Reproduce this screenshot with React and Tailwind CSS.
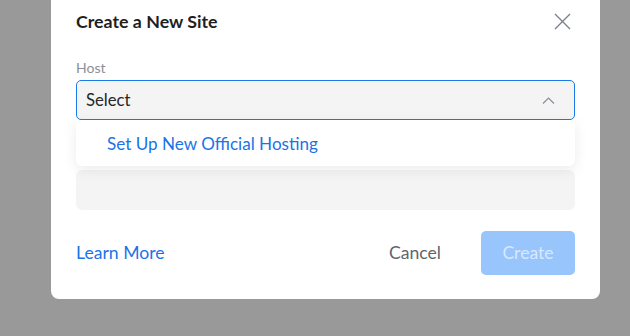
import React from 'react';

export default function App() {
  return (
    <div
      className="w-[630px] h-[336px] bg-[#999999] overflow-hidden"
      style={{ fontFamily: 'Lato, "Open Sans", sans-serif' }}
    >
      <div className="ml-[51px] w-[549px] bg-white rounded-b-[8px] px-[25px] pt-[9px] pb-[24px]">
        {/* Header */}
        <div className="flex items-center justify-between h-[24px]">
          <h2 className="text-[17.8px] font-bold text-[#1f1f1f] leading-[24px]">Create a New Site</h2>
          <button className="mr-[4px] text-[#7b808a]">
            <svg width="17" height="17" viewBox="0 0 17 17" fill="none" stroke="currentColor" strokeWidth="1.4">
              <path d="M1 1L16 16M16 1L1 16" />
            </svg>
          </button>
        </div>

        {/* Host field */}
        <div className="mt-[26px] text-[14px] leading-[18px] text-[#8a8f98]">Host</div>
        <div className="relative mt-[3px]">
          <div className="flex items-center justify-between h-[40px] px-[9px] rounded-[5px] border border-[#1a7ae8] bg-[#f4f4f4]">
            <span className="mt-[2px] text-[16.7px] text-[#262626]">Select</span>
            <svg className="mr-[10px]" width="13" height="7" viewBox="0 0 13 7" fill="none" stroke="#8a8f98" strokeWidth="1.2">
              <path d="M1 6.5L6.5 1L12 6.5" />
            </svg>
          </div>

          {/* Dropdown menu */}
          <div className="absolute left-0 right-0 top-[40px] z-10 h-[46px] flex items-center bg-white rounded-b-[6px] shadow-[0_4px_14px_rgba(0,0,0,0.08)] px-[31px]">
            <span className="mt-[2px] text-[17.1px] text-[#1a73e8]">Set Up New Official Hosting</span>
          </div>
        </div>

        {/* Hidden field under menu */}
        <div className="mt-[50px] h-[40px] rounded-[6px] bg-[#f4f4f4]" />

        {/* Footer */}
        <div className="mt-[21px] flex items-center justify-between">
          <a className="text-[17.6px] text-[#1a73e8]">Learn More</a>
          <div className="flex items-center">
            <button className="text-[17.6px] text-[#5f646d] mr-[40px]">Cancel</button>
            <button className="w-[94px] h-[44px] rounded-[5px] bg-[#99c5fd] text-[17.6px] text-[#d9e8fd]">Create</button>
          </div>
        </div>
      </div>
    </div>
  );
}
